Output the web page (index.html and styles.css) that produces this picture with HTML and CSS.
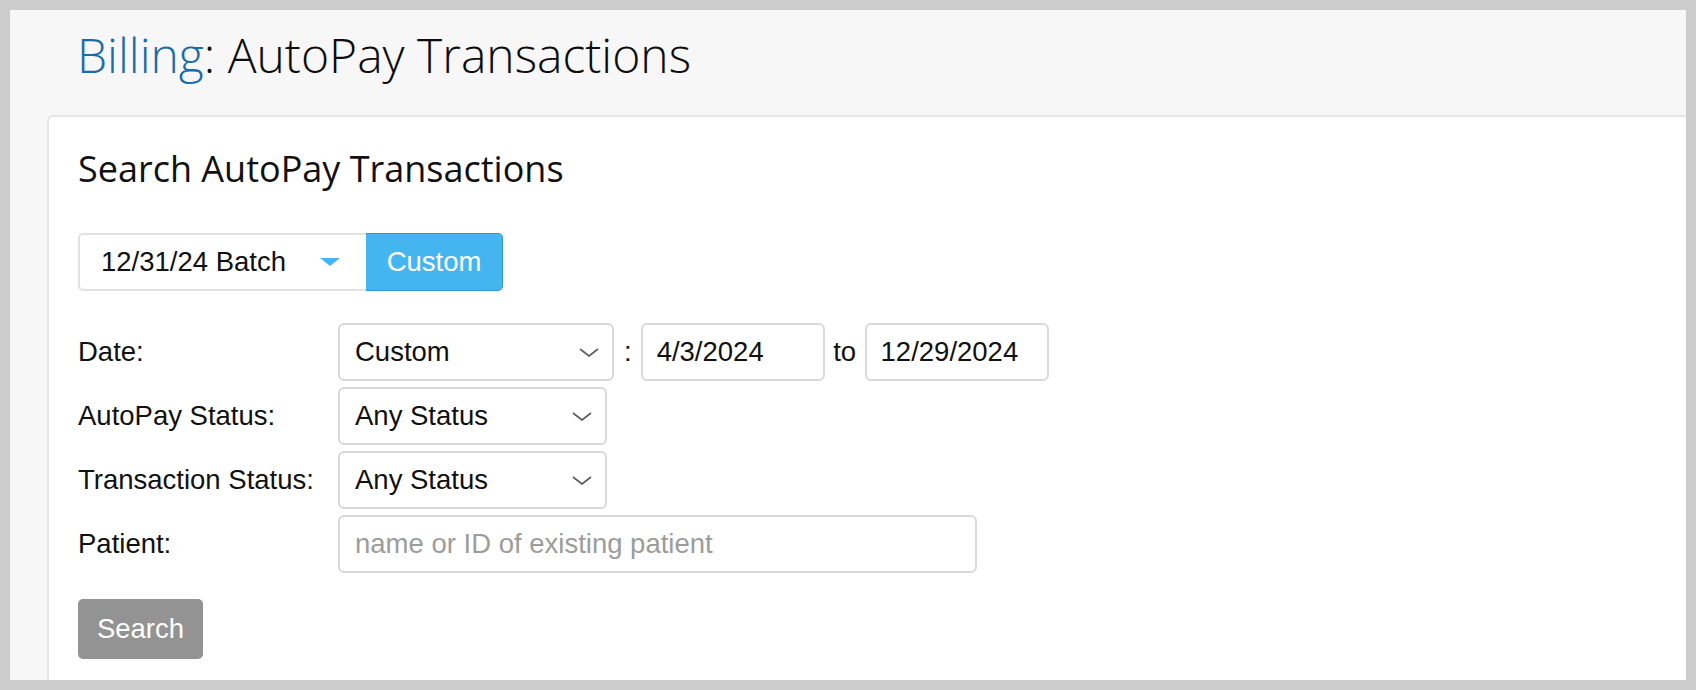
FILE: index.html
```html
<!DOCTYPE html>
<html lang="en">
<head>
<meta charset="utf-8">
<title>Billing: AutoPay Transactions</title>
<link rel="stylesheet" href="styles.css">
</head>
<body>
<div class="frame">
  <div class="page">
    <header class="page-header">
      <h1 class="page-title"><a class="crumb" href="#">Billing</a>: AutoPay Transactions</h1>
    </header>
    <section class="card">
      <h2 class="card-title">Search AutoPay Transactions</h2>
      <div class="batch-group">
        <div class="batch-select">
          <span>12/31/24 Batch</span>
          <svg class="caret" width="20" height="8" viewBox="0 0 20 8"><polygon points="0,0 20,0 10,8" fill="#45b5f0"/></svg>
        </div>
        <button class="btn-custom" type="button">Custom</button>
      </div>
      <form class="search-form">
        <div class="form-row">
          <label class="form-label">Date:</label>
          <div class="field-group">
            <div class="select select-date">
              <span>Custom</span>
              <svg class="chevron" width="20" height="9" viewBox="0 0 20 9"><polyline points="1,1 10,8 19,1" fill="none" stroke="#5e5e5e" stroke-width="1.7"/></svg>
            </div>
            <span class="sep sep-colon">:</span>
            <input class="text-input input-date" type="text" value="4/3/2024">
            <span class="sep sep-to">to</span>
            <input class="text-input input-date" type="text" value="12/29/2024">
          </div>
        </div>
        <div class="form-row">
          <label class="form-label">AutoPay Status:</label>
          <div class="select select-status">
            <span>Any Status</span>
            <svg class="chevron" width="20" height="9" viewBox="0 0 20 9"><polyline points="1,1 10,8 19,1" fill="none" stroke="#5e5e5e" stroke-width="1.7"/></svg>
          </div>
        </div>
        <div class="form-row">
          <label class="form-label">Transaction Status:</label>
          <div class="select select-status">
            <span>Any Status</span>
            <svg class="chevron" width="20" height="9" viewBox="0 0 20 9"><polyline points="1,1 10,8 19,1" fill="none" stroke="#5e5e5e" stroke-width="1.7"/></svg>
          </div>
        </div>
        <div class="form-row">
          <label class="form-label">Patient:</label>
          <input class="text-input input-patient" type="text" placeholder="name or ID of existing patient">
        </div>
        <button class="btn-search" type="button">Search</button>
      </form>
    </section>
  </div>
</div>
</body>
</html>
```
FILE: styles.css
```css
* {
  box-sizing: border-box;
}

html,
body {
  margin: 0;
  height: 690px;
  overflow: hidden;
}

body {
  background: #cccccc;
  font-family: "Liberation Sans", Arial, sans-serif;
  color: #111111;
}

.frame {
  height: 690px;
  padding: 10px;
}

.page {
  height: 670px;
  background: #f7f7f7;
  overflow: hidden;
}

.page-header {
  height: 105px;
  padding: 14px 0 0 67px;
}

.page-title {
  margin: 0;
  font-family: "Open Sans", sans-serif;
  font-weight: 300;
  font-size: 48px;
  line-height: 62px;
  color: #0d0d0d;
}

.crumb {
  color: #1a6ca6;
  text-decoration: none;
}

.card {
  margin: 0 -20px 0 37px;
  min-height: 620px;
  background: #ffffff;
  border-top: 2px solid #e6e6e6;
  border-left: 2px solid #e6e6e6;
  border-radius: 6px 0 0 0;
  padding: 28px 0 0 29px;
}

.card-title {
  margin: 0;
  font-family: "Open Sans", sans-serif;
  font-weight: 400;
  font-size: 36px;
  line-height: 48px;
  color: #111111;
}

.batch-group {
  margin-top: 40px;
  display: flex;
  height: 58px;
}

.batch-select {
  width: 288px;
  display: flex;
  align-items: center;
  justify-content: space-between;
  padding: 0 26px 0 21px;
  border: 2px solid #e2e2e2;
  border-right: none;
  border-radius: 5px 0 0 5px;
  font-size: 27.5px;
  background: #ffffff;
}

.caret {
  display: block;
}

.btn-custom {
  height: 58px;
  width: 137px;
  padding: 0;
  background: #45b5f0;
  color: #ffffff;
  border: 1px solid #2a9ad8;
  border-left: none;
  border-radius: 0 5px 5px 0;
  font-family: "Liberation Sans", Arial, sans-serif;
  font-size: 27.5px;
}

.search-form {
  margin-top: 32px;
  display: flex;
  flex-direction: column;
  align-items: flex-start;
  gap: 6px;
}

.form-row {
  display: flex;
  align-items: center;
  height: 58px;
}

.form-label {
  width: 260px;
  font-size: 27.5px;
  color: #111111;
}

.field-group {
  display: flex;
  align-items: center;
  height: 58px;
}

.select {
  height: 58px;
  display: flex;
  align-items: center;
  justify-content: space-between;
  padding: 0 13px 0 15px;
  border: 2px solid #d9d9d9;
  border-radius: 6px;
  background: #ffffff;
  font-size: 27.5px;
  color: #111111;
}

.chevron {
  display: block;
}

.select-date {
  width: 276px;
}

.select-status {
  width: 269px;
}

.sep {
  font-size: 27.5px;
  color: #111111;
}

.sep-colon {
  margin: 0 9px 0 10px;
}

.sep-to {
  margin: 0 8.5px;
}

.text-input {
  height: 58px;
  padding: 0 14px;
  border: 2px solid #d9d9d9;
  border-radius: 6px;
  background: #ffffff;
  font-family: "Liberation Sans", Arial, sans-serif;
  font-size: 27.5px;
  color: #111111;
  outline: none;
}

.input-date {
  width: 184px;
}

.input-patient {
  width: 639px;
  padding-left: 15px;
}

.input-patient::placeholder {
  color: #9c9c9c;
}

.btn-search {
  margin-top: 20px;
  height: 60px;
  width: 125px;
  padding: 0;
  background: #939393;
  color: #ffffff;
  border: none;
  border-radius: 5px;
  font-family: "Liberation Sans", Arial, sans-serif;
  font-size: 27.5px;
}
```
